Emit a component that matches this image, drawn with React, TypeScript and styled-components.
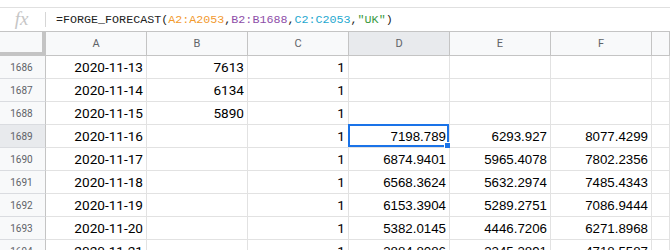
import React from "react";
import styled, { createGlobalStyle, css } from "styled-components";

const GlobalStyle = createGlobalStyle`
  html, body {
    margin: 0;
    padding: 0;
    background: #ffffff;
    overflow: hidden;
  }
  * {
    box-sizing: border-box;
  }
`;

type Row = {
  num: number;
  date: string;
  b?: string;
  c: string;
  d?: string;
  e?: string;
  f?: string;
};

const rows: Row[] = [
  { num: 1686, date: "2020-11-13", b: "7613", c: "1" },
  { num: 1687, date: "2020-11-14", b: "6134", c: "1" },
  { num: 1688, date: "2020-11-15", b: "5890", c: "1" },
  { num: 1689, date: "2020-11-16", c: "1", d: "7198.789", e: "6293.927", f: "8077.4299" },
  { num: 1690, date: "2020-11-17", c: "1", d: "6874.9401", e: "5965.4078", f: "7802.2356" },
  { num: 1691, date: "2020-11-18", c: "1", d: "6568.3624", e: "5632.2974", f: "7485.4343" },
  { num: 1692, date: "2020-11-19", c: "1", d: "6153.3904", e: "5289.2751", f: "7086.9444" },
  { num: 1693, date: "2020-11-20", c: "1", d: "5382.0145", e: "4446.7206", f: "6271.8968" },
  { num: 1694, date: "2020-11-21", c: "1", d: "3884.8086", e: "3345.3891", f: "4718.5587" },
];

const columns = ["A", "B", "C", "D", "E", "F", ""];
const SELECTED_ROW = 1689;
const SELECTED_COL = "D";

const Page = styled.div`
  width: 670px;
  height: 250px;
  padding-top: 7px;
  display: flex;
  flex-direction: column;
  overflow: hidden;
`;

const FormulaBar = styled.div`
  flex: none;
  height: 25px;
  border-top: 1px solid #e0e0e0;
  border-bottom: 1px solid #c4c4c4;
  display: flex;
  align-items: center;
`;

const FxBox = styled.div`
  width: 45px;
  height: 100%;
  display: flex;
  align-items: center;
  justify-content: center;
  padding-right: 2px;
`;

const FxLabel = styled.span`
  font-family: "Liberation Serif", serif;
  font-style: italic;
  font-size: 19px;
  color: #c6c6c6;
  line-height: 1;
  margin-top: -2px;
`;

const Divider = styled.div`
  width: 1px;
  height: 15px;
  background: #d6d6d6;
`;

const FormulaText = styled.div`
  font-family: "Liberation Mono", "DejaVu Sans Mono", monospace;
  font-size: 11.7px;
  color: #222222;
  padding-left: 10px;
  white-space: nowrap;
  margin-top: 1px;
`;

const Ref = styled.span<{ $color: string }>`
  color: ${({ $color }) => $color};
`;

const Grid = styled.div`
  flex: none;
  display: grid;
  grid-template-columns: 46px repeat(6, 101px) 1fr;
  grid-auto-rows: 23px;
  grid-template-rows: 24px;
`;

const Corner = styled.div`
  background: #f8f9fa;
  border-right: 4px solid #c4c4c4;
  border-bottom: 4px solid #c4c4c4;
`;

const ColHeader = styled.div<{ $active?: boolean }>`
  background: ${({ $active }) => ($active ? "#e8eaed" : "#f8f9fa")};
  border-right: 1px solid #c4c4c4;
  border-bottom: 1px solid #c4c4c4;
  display: flex;
  align-items: center;
  justify-content: center;
  font-family: "Roboto", "Liberation Sans", sans-serif;
  font-size: 11px;
  color: #5f6368;
`;

const RowHeader = styled.div<{ $active?: boolean }>`
  background: ${({ $active }) => ($active ? "#e8eaed" : "#f8f9fa")};
  border-right: 1px solid #c4c4c4;
  border-bottom: 1px solid #dadce0;
  display: flex;
  align-items: center;
  justify-content: center;
  font-family: "Roboto", "Liberation Sans", sans-serif;
  font-size: 10px;
  color: #5f6368;
  padding-right: 2px;
`;

const Cell = styled.div<{ $font?: "roboto" | "arial" }>`
  position: relative;
  border-right: 1px solid #e2e2e2;
  border-bottom: 1px solid #e2e2e2;
  display: flex;
  align-items: center;
  justify-content: flex-end;
  padding-right: 3px;
  color: #000000;
  white-space: nowrap;
  ${({ $font }) =>
    $font === "roboto"
      ? css`
          font-family: "Roboto", "Liberation Sans", sans-serif;
          font-size: 13.6px;
        `
      : css`
          font-family: "Liberation Sans", Arial, sans-serif;
          font-size: 13.3px;
        `}
`;

const Selection = styled.div`
  position: absolute;
  top: -1px;
  left: -1px;
  right: 0;
  bottom: 0;
  border: 2px solid #1a73e8;
  pointer-events: none;
`;

const FillHandle = styled.div`
  position: absolute;
  right: -4px;
  bottom: -4px;
  width: 7px;
  height: 7px;
  background: #1a73e8;
  border: 1px solid #ffffff;
`;

const App = () => {
  return (
    <>
      <GlobalStyle />
      <Page>
        <FormulaBar>
          <FxBox>
            <FxLabel>fx</FxLabel>
          </FxBox>
          <Divider />
          <FormulaText>
            =FORGE_FORECAST(<Ref $color="#f29a2e">A2:A2053</Ref>,
            <Ref $color="#8e4ea8">B2:B1688</Ref>,
            <Ref $color="#1fa9cf">C2:C2053</Ref>,
            <Ref $color="#3b9a3f">"UK"</Ref>)
          </FormulaText>
        </FormulaBar>
        <Grid>
          <Corner />
          {columns.map((c, i) => (
            <ColHeader key={i} $active={c === SELECTED_COL}>
              {c}
            </ColHeader>
          ))}
          {rows.map((r) => {
            const sel = r.num === SELECTED_ROW;
            return (
              <React.Fragment key={r.num}>
                <RowHeader $active={sel}>{r.num}</RowHeader>
                <Cell $font="roboto">{r.date}</Cell>
                <Cell $font="roboto">{r.b}</Cell>
                <Cell $font="roboto">{r.c}</Cell>
                <Cell>
                  {r.d}
                  {sel && (
                    <Selection>
                      <FillHandle />
                    </Selection>
                  )}
                </Cell>
                <Cell>{r.e}</Cell>
                <Cell>{r.f}</Cell>
                <Cell />
              </React.Fragment>
            );
          })}
        </Grid>
      </Page>
    </>
  );
};

export default App;
